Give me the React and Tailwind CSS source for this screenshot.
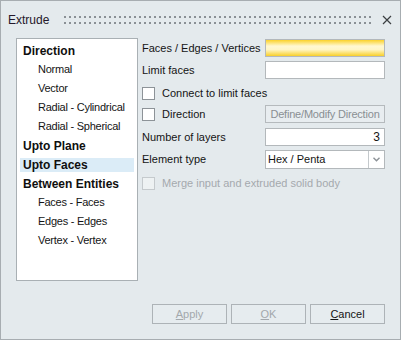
// Dialogo "Extrude": lista de modos a esquerda, campos a direita, botoes no rodape.

const MODES = [
  { label: 'Direction', head: true },
  { label: 'Normal' },
  { label: 'Vector' },
  { label: 'Radial - Cylindrical' },
  { label: 'Radial - Spherical' },
  { label: 'Upto Plane', head: true },
  { label: 'Upto Faces', head: true, selected: true },
  { label: 'Between Entities', head: true },
  { label: 'Faces - Faces' },
  { label: 'Edges - Edges' },
  { label: 'Vertex - Vertex' },
];

function Check({ disabled }) {
  return (
    <span
      className={
        disabled
          ? 'w-[13px] h-[13px] shrink-0 border border-[#c5cacd] bg-[#eef2f3]'
          : 'w-[13px] h-[13px] shrink-0 border border-[#8d9398] bg-white'
      }
    />
  );
}

function Label({ children }) {
  return <span className="w-[123px] shrink-0 text-[11px] text-[#141414]">{children}</span>;
}

function Btn({ children, disabled }) {
  return (
    <button
      className={
        'w-[75px] h-[20px] border border-[#adb3b7] bg-[#e6ecef] text-[11px] ' +
        (disabled ? 'text-[#a3a8ac]' : 'text-[#141414]')
      }
    >
      {children}
    </button>
  );
}

export default function App() {
  return (
    <div className="w-[401px] h-[340px] border border-[#a7adb1] bg-[#e4eaed] flex flex-col font-['Liberation_Sans',Arial,sans-serif]">
      {/* barra de titulo */}
      <div className="h-[37px] flex items-center pl-[7px]">
        <span className="text-[12px] text-[#24182a]">Extrude</span>
        <svg className="ml-[15px]" width="310" height="8">
          <defs>
            <pattern id="grip" width="5" height="6" patternUnits="userSpaceOnUse">
              <rect width="2" height="2" fill="#8a9095" />
            </pattern>
          </defs>
          <rect width="310" height="8" fill="url(#grip)" />
        </svg>
        <svg className="ml-[8px]" width="10" height="10" viewBox="0 0 10 10">
          <path d="M1 1 L9 9 M9 1 L1 9" stroke="#3c3f42" strokeWidth="1.2" />
        </svg>
      </div>

      <div className="flex px-[15px] gap-[4px]">
        <div className="w-[122px] h-[243px] border border-[#a9b0b4] bg-white pt-[2px]">
          {MODES.map((m) => (
            <div key={m.label} className="h-[19px] flex items-center px-[3px]">
              <div
                className={
                  'w-full h-[14px] flex items-center ' +
                  (m.selected ? 'bg-[#dbecf7] ' : '') +
                  (m.head
                    ? 'pl-[3px] text-[12px] font-bold text-[#0f0f0f]'
                    : 'pl-[18px] text-[11px] tracking-[-0.25px] text-[#141414]')
                }
              >
                {m.label}
              </div>
            </div>
          ))}
        </div>

        <div className="flex-1 flex flex-col">
          <div className="mt-[1px] h-[18px] flex items-center">
            <Label>Faces / Edges / Vertices</Label>
            <div className="w-[120px] h-[18px] border border-[#b3b8bb] bg-[linear-gradient(to_bottom,#fbd22a,#fff8d2_38%,#fff6c6_60%,#f8cf2a)]" />
          </div>
          <div className="mt-[4px] h-[18px] flex items-center">
            <Label>Limit faces</Label>
            <div className="w-[120px] h-[18px] border border-[#b3b8bb] bg-white" />
          </div>
          <div className="mt-[5px] h-[18px] flex items-center gap-[7px]">
            <Check />
            <span className="text-[11px] text-[#141414]">Connect to limit faces</span>
          </div>
          <div className="mt-[3px] h-[18px] flex items-center">
            <div className="w-[123px] flex items-center gap-[7px]">
              <Check />
              <span className="text-[11px] text-[#141414]">Direction</span>
            </div>
            <div className="w-[120px] h-[18px] border border-[#b5babd] bg-[#e8edf0] flex items-center justify-center text-[11px] tracking-[-0.2px] text-[#8a8f93]">
              Define/Modify Direction
            </div>
          </div>
          <div className="mt-[5px] h-[18px] flex items-center">
            <Label>Number of layers</Label>
            <div className="w-[120px] h-[18px] border border-[#b3b8bb] bg-white flex items-center justify-end pr-[4px] text-[12px] text-[#141414]">
              3
            </div>
          </div>
          <div className="mt-[4px] h-[19px] flex items-center">
            <Label>Element type</Label>
            <div className="w-[120px] h-[19px] border border-[#b3b8bb] bg-white flex">
              <div className="flex-1 flex items-center pl-[2px] text-[11px] text-[#141414]">Hex / Penta</div>
              <div className="w-[16px] border-l border-[#c4c9cc] flex items-center justify-center">
                <svg width="7" height="5" viewBox="0 0 7 5">
                  <path d="M0.5 0.8 L3.5 3.8 L6.5 0.8" fill="none" stroke="#8c9297" strokeWidth="1.4" />
                </svg>
              </div>
            </div>
          </div>
          <div className="mt-[5px] h-[18px] flex items-center gap-[7px]">
            <Check disabled />
            <span className="text-[11px] text-[#a4a9ad]">Merge input and extruded solid body</span>
          </div>
        </div>
      </div>

      <div className="mt-[23px] flex justify-end gap-[4px] px-[15px]">
        <Btn disabled>
          <span className="underline">A</span>pply
        </Btn>
        <Btn disabled>
          <span className="underline">O</span>K
        </Btn>
        <Btn>
          <span className="underline">C</span>ancel
        </Btn>
      </div>
    </div>
  );
}
